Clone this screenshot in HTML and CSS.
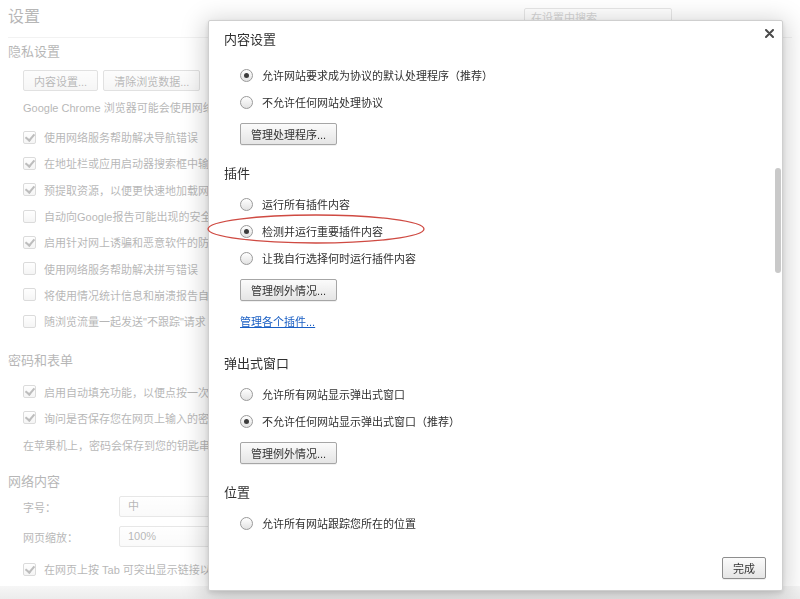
FILE: index.html
```html
<!DOCTYPE html>
<html lang="zh-CN">
<head>
    <meta charset="UTF-8">
    <title>设置 - 内容设置</title>
    <link rel="stylesheet" href="styles.css">
</head>
<body>
    <div class="page">
        <header class="page-head">
            <h1>设置</h1>
            <div class="search">在设置中搜索</div>
        </header>

        <h2>隐私设置</h2>
        <div class="sec">
            <div class="btn-row">
                <button class="pbtn">内容设置...</button>
                <button class="pbtn">清除浏览数据...</button>
            </div>
            <p class="note">Google Chrome 浏览器可能会使用网络服务改善您的浏览体验。</p>
            <div class="checks first">
                <div class="check"><span class="cb on"></span>使用网络服务帮助解决导航错误</div>
                <div class="check"><span class="cb on"></span>在地址栏或应用启动器搜索框中输入</div>
                <div class="check"><span class="cb on"></span>预提取资源，以便更快速地加载网页</div>
                <div class="check"><span class="cb"></span>自动向Google报告可能出现的安全事件</div>
                <div class="check"><span class="cb on"></span>启用针对网上诱骗和恶意软件的防护</div>
                <div class="check"><span class="cb"></span>使用网络服务帮助解决拼写错误</div>
                <div class="check"><span class="cb"></span>将使用情况统计信息和崩溃报告自动</div>
                <div class="check"><span class="cb"></span>随浏览流量一起发送"不跟踪"请求</div>
            </div>
        </div>

        <h2 class="gap">密码和表单</h2>
        <div class="sec">
            <div class="checks pw">
                <div class="check"><span class="cb on"></span>启用自动填充功能，以便点按一次</div>
                <div class="check"><span class="cb on"></span>询问是否保存您在网页上输入的密码</div>
            </div>
            <p class="note tight">在苹果机上，密码会保存到您的钥匙串中</p>
        </div>

        <h2 class="gap2">网络内容</h2>
        <div class="sec">
            <div class="field"><span class="field-label">字号：</span><div class="select">中</div></div>
            <div class="field"><span class="field-label">网页缩放：</span><div class="select">100%</div></div>
            <div class="checks last">
                <div class="check"><span class="cb on"></span>在网页上按 Tab 可突出显示链接以</div>
            </div>
        </div>
    </div>
    <div class="page-bottom"></div>

    <div class="overlay">
        <div class="dialog">
            <button class="close" title="关闭">
                <svg width="9" height="9" viewBox="0 0 9 9"><path d="M1 1L8 8M8 1L1 8" stroke="#4a4a4a" stroke-width="2" stroke-linecap="round"/></svg>
            </button>

            <div class="dialog-body">
                <h3 class="title">内容设置</h3>
                <div class="radios top">
                    <label class="radio"><span class="rb on"></span>允许网站要求成为协议的默认处理程序（推荐）</label>
                    <label class="radio"><span class="rb"></span>不允许任何网站处理协议</label>
                </div>
                <button class="dbtn">管理处理程序...</button>

                <h3>插件</h3>
                <div class="radios">
                    <label class="radio"><span class="rb"></span>运行所有插件内容</label>
                    <label class="radio"><span class="rb on"></span>检测并运行重要插件内容</label>
                    <label class="radio"><span class="rb"></span>让我自行选择何时运行插件内容</label>
                </div>
                <button class="dbtn">管理例外情况...</button>
                <a class="link" href="#plugins">管理各个插件...</a>

                <h3 class="after-link">弹出式窗口</h3>
                <div class="radios">
                    <label class="radio"><span class="rb"></span>允许所有网站显示弹出式窗口</label>
                    <label class="radio"><span class="rb on"></span>不允许任何网站显示弹出式窗口（推荐）</label>
                </div>
                <button class="dbtn">管理例外情况...</button>

                <h3>位置</h3>
                <div class="radios">
                    <label class="radio"><span class="rb"></span>允许所有网站跟踪您所在的位置</label>
                </div>
            </div>

            <div class="scroll-thumb"></div>

            <svg class="mark" width="226" height="34" viewBox="0 0 226 34">
                <ellipse cx="111" cy="17" rx="108" ry="14" fill="none" stroke="#cf4a42" stroke-width="1.3"/>
            </svg>

            <div class="dialog-foot">
                <button class="dbtn done">完成</button>
            </div>
        </div>
    </div>
</body>
</html>
```

FILE: styles.css
```css
body {
    margin: 0;
    font-family: "Liberation Sans", "Noto Sans CJK SC", sans-serif;
    font-size: 11px;
    color: #303030;
    background-color: #fff;
    height: 599px;
    overflow: hidden;
}
button {
    font-family: inherit;
    font-size: 11px;
    color: #333;
}

/* settings page behind the dialog */
.page {
    opacity: 0.35;
    padding: 0 8px;
    height: 586px;
    overflow: hidden;
    white-space: nowrap;
}
.page-head {
    height: 37px;
    border-bottom: 1px solid #dcdcdc;
    display: flex;
    justify-content: space-between;
    align-items: flex-start;
}
.page-head h1 {
    margin: 0;
    padding-top: 7px;
    font-size: 16px;
    font-weight: normal;
    line-height: 20px;
}
.search {
    margin: 8px 120px 0 0;
    width: 148px;
    height: 20px;
    box-sizing: border-box;
    border: 1px solid #bbb;
    border-radius: 2px;
    padding: 0 6px;
    line-height: 18px;
    color: #888;
}
.page h2 {
    margin: 4px 0 0;
    font-size: 13px;
    font-weight: normal;
    line-height: 20px;
}
.page h2.gap {
    margin-top: 17px;
}
.page h2.gap2 {
    margin-top: 16px;
}
.sec {
    padding-left: 15px;
}
.btn-row {
    display: flex;
    gap: 5px;
    margin-top: 8px;
}
.pbtn {
    height: 21px;
    margin: 0;
    padding: 0 10px;
    border: 1px solid #aaa;
    border-radius: 2px;
    background: linear-gradient(#fafafa, #e6e6e6);
}
.note {
    margin: 7px 0 0;
    line-height: 20px;
}
.note.tight {
    margin-top: 5px;
}
.checks.first {
    margin-top: 6px;
}
.checks.pw {
    margin-top: 7px;
}
.checks.last {
    margin-top: 4px;
}
.check {
    display: flex;
    align-items: center;
    gap: 8px;
    height: 26.3px;
}
.cb {
    position: relative;
    width: 13px;
    height: 13px;
    box-sizing: border-box;
    border: 1px solid #999;
    border-radius: 2px;
    background: linear-gradient(#fff, #e4e4e4);
    flex: none;
}
.cb.on::after {
    content: "";
    position: absolute;
    left: 3px;
    top: 0;
    width: 4px;
    height: 7px;
    border: solid #444;
    border-width: 0 2px 2px 0;
    transform: rotate(40deg);
}
.field {
    display: flex;
    align-items: center;
    height: 30px;
}
.field-label {
    width: 96px;
}
.select {
    width: 150px;
    height: 21px;
    box-sizing: border-box;
    border: 1px solid #bbb;
    border-radius: 2px;
    padding-left: 8px;
    line-height: 19px;
    background: linear-gradient(#fff, #f2f2f2);
}
.page-bottom {
    height: 13px;
    background: linear-gradient(#f6f6f6, #ececec);
}

/* content settings dialog */
.overlay {
    position: fixed;
    top: 0;
    left: 0;
    right: 0;
    bottom: 0;
}
.dialog {
    position: absolute;
    left: 208px;
    top: 20px;
    width: 575px;
    height: 571px;
    box-sizing: border-box;
    background-color: #fff;
    border: 1px solid #cfcfcf;
    border-radius: 2px;
    box-shadow: 0 4px 24px 4px rgba(0,0,0,0.18), 0 2px 5px rgba(0,0,0,0.12);
    display: flex;
    flex-direction: column;
}
.close {
    position: absolute;
    right: 8px;
    top: 8px;
    width: 9px;
    height: 9px;
    padding: 0;
    border: none;
    background: none;
    display: flex;
}
.dialog-body {
    height: 525px;
    flex: none;
    box-sizing: border-box;
    overflow: hidden;
    padding: 9px 0 0 15px;
    white-space: nowrap;
}
.dialog-body h3 {
    margin: 19px 0 0;
    font-size: 13px;
    font-weight: normal;
    line-height: 20px;
}
.dialog-body h3.title {
    margin-top: 0;
}
.dialog-body h3.after-link {
    margin-top: 22px;
}
.radios {
    margin-top: 6.5px;
}
.radios.top {
    margin-top: 11.5px;
}
.radio {
    display: flex;
    align-items: center;
    gap: 9px;
    height: 27px;
    padding-left: 16px;
}
.rb {
    position: relative;
    width: 13px;
    height: 13px;
    box-sizing: border-box;
    border: 1px solid #9a9a9a;
    border-radius: 50%;
    background: linear-gradient(#fff, #e2e2e2);
    flex: none;
}
.rb.on::after {
    content: "";
    position: absolute;
    left: 3px;
    top: 3px;
    width: 5px;
    height: 5px;
    border-radius: 50%;
    background-color: #3c3c3c;
}
.dbtn {
    display: block;
    height: 22px;
    margin: 7.5px 0 0 16px;
    padding: 0 10px;
    border: 1px solid #a6a6a6;
    border-radius: 2px;
    background: linear-gradient(#fbfbfb, #e5e5e5);
    box-shadow: 0 1px 0 rgba(0,0,0,0.06);
}
.link {
    display: block;
    margin: 11px 0 0 16px;
    line-height: 20px;
    color: #1a5fc4;
    text-decoration: underline;
    width: fit-content;
}
.scroll-thumb {
    position: absolute;
    right: 1px;
    top: 147px;
    width: 6px;
    height: 105px;
    border-radius: 3px;
    background-color: #c9c9c9;
}
.mark {
    position: absolute;
    left: -4px;
    top: 191px;
}
.dialog-foot {
    flex: 1;
    display: flex;
    justify-content: flex-end;
    align-items: flex-start;
    padding: 11px 16px 0 0;
}
.dbtn.done {
    margin: 0;
    width: 44px;
    padding: 0;
    border-color: #8e8e8e;
}
```
